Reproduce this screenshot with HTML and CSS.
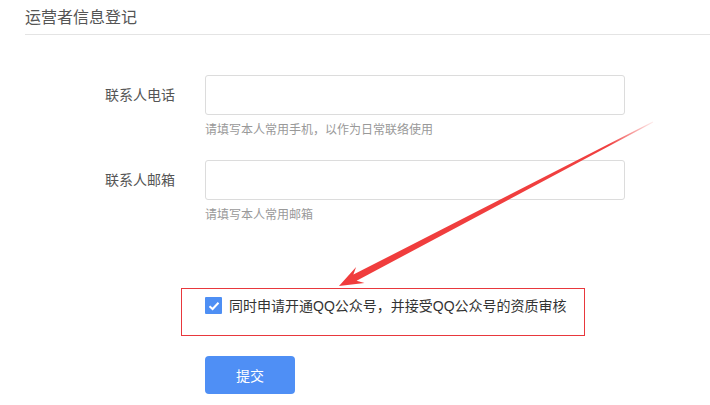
FILE: index.html
```html
<!DOCTYPE html>
<html lang="zh-CN">
<head>
    <meta charset="UTF-8">
    <title>运营者信息登记</title>
    <link rel="stylesheet" href="styles.css">
</head>
<body>
    <div class="page">
        <div class="section-title">运营者信息登记</div>

        <div class="form">
            <div class="form-row">
                <label class="form-label">联系人电话</label>
                <div class="form-field">
                    <input class="text-input" type="text">
                    <p class="hint">请填写本人常用手机，以作为日常联络使用</p>
                </div>
            </div>

            <div class="form-row">
                <label class="form-label">联系人邮箱</label>
                <div class="form-field">
                    <input class="text-input" type="text">
                    <p class="hint">请填写本人常用邮箱</p>
                </div>
            </div>

            <div class="agree-box">
                <span class="checkbox">
                    <svg width="12" height="10" viewBox="0 0 12 10">
                        <path d="M1.5 5.2 L4.6 8 L10.5 1.8" fill="none" stroke="#fff" stroke-width="2"/>
                    </svg>
                </span>
                <span class="agree-text">同时申请开通QQ公众号，并接受QQ公众号的资质审核</span>
            </div>

            <button class="btn-submit">提交</button>
        </div>

        <!-- annotation arrow drawn over the form -->
        <svg class="annotation" width="710" height="405" viewBox="0 0 710 405">
            <defs>
                <linearGradient id="arrowFade" gradientUnits="userSpaceOnUse" x1="653" y1="122" x2="339" y2="286">
                    <stop offset="0" stop-color="#f04545" stop-opacity="0.1"/>
                    <stop offset="0.14" stop-color="#f04040" stop-opacity="1"/>
                    <stop offset="1" stop-color="#f03c3c" stop-opacity="1"/>
                </linearGradient>
            </defs>
            <polygon fill="url(#arrowFade)"
                points="339,286 364.5,282.9 356.6,280.8 653.2,122.4 652.8,121.6 353.4,274.6 356.1,266.9"/>
        </svg>
    </div>
</body>
</html>
```

FILE: styles.css
```css
* {
    margin: 0;
    padding: 0;
    box-sizing: border-box;
}

body {
    background: #fff;
    font-family: "Liberation Sans", "Noto Sans CJK SC", sans-serif;
    color: #333;
    overflow: hidden;
}

.page {
    position: relative;
    width: 710px;
    height: 405px;
    padding-left: 25px;
}

/* Title */
.section-title {
    font-size: 16px;
    line-height: 20px;
    color: #555;
    padding: 8px 0 6px;
    border-bottom: 1px solid #e4e4e4;
}

/* Form */
.form {
    padding-top: 40px;
}

.form-row {
    display: flex;
    margin-bottom: 21px;
}

.form-label {
    width: 180px;
    padding-right: 30px;
    text-align: right;
    font-size: 14px;
    line-height: 40px;
    color: #555;
}

.text-input {
    display: block;
    width: 420px;
    height: 40px;
    border: 1px solid #dcdcdc;
    border-radius: 3px;
    outline: none;
}

.hint {
    margin-top: 6px;
    font-size: 12px;
    line-height: 18px;
    color: #999;
}

/* Agreement checkbox, boxed in red */
.agree-box {
    display: flex;
    align-items: flex-start;
    width: 404px;
    height: 48px;
    margin: 64px 0 0 156px;
    padding: 7px 0 0 23px;
    border: 1px solid #e8383d;
}

.checkbox {
    display: flex;
    align-items: center;
    justify-content: center;
    width: 17px;
    height: 17px;
    margin-top: 1px;
    background: #4e8ff4;
    border-radius: 1px;
}

.agree-text {
    margin-left: 7px;
    font-size: 14px;
    line-height: 20px;
    color: #333;
}

.btn-submit {
    display: block;
    width: 90px;
    height: 38px;
    margin: 20px 0 0 180px;
    border: none;
    border-radius: 4px;
    background: #4f8ff5;
    color: #fff;
    font-family: "Liberation Sans", "Noto Sans CJK SC", sans-serif;
    font-size: 14px;
}

.annotation {
    position: absolute;
    top: 0;
    left: 0;
    pointer-events: none;
}
```
